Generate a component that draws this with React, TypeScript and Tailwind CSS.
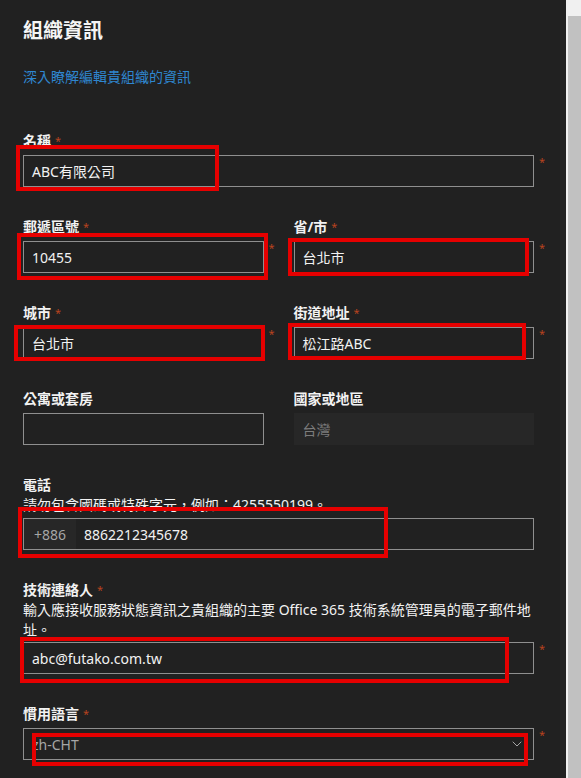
import { ChevronDown } from "lucide-react";

const FONT = {
  fontFamily: '"Segoe UI", "Noto Sans", "Noto Sans CJK TC", sans-serif',
};

// annotation box drawn over a field
function Mark({ className }: { className: string }) {
  return (
    <div
      className={`pointer-events-none absolute border-[4px] border-[#e60000] ${className}`}
    />
  );
}

function Star({ inLabel }: { inLabel?: boolean }) {
  return (
    <span
      className={
        inLabel
          ? "ml-1 text-[11px] font-normal text-[#b8431f] align-top"
          : "text-[11px] leading-none text-[#b8431f]"
      }
    >
      *
    </span>
  );
}

function Label({ text, required }: { text: string; required?: boolean }) {
  return (
    <div className="h-5 text-[14px] font-bold leading-5 text-[#f2f2f2]">
      {text}
      {required && <Star inLabel />}
    </div>
  );
}

function Input({
  value,
  required,
  disabled,
}: {
  value?: string;
  required?: boolean;
  disabled?: boolean;
}) {
  return (
    <div className="flex">
      <div
        className={
          disabled
            ? "flex h-8 flex-1 items-center bg-[#272727] px-[9px] text-[14px] text-[#7c7c7c]"
            : "flex h-8 flex-1 items-center border border-[#8f8f8f] px-2 text-[14px] text-[#f2f2f2]"
        }
      >
        {value}
      </div>
      <div className="w-[30px] pl-[5px] pt-[1px] text-[11px] leading-none">
        {required && <Star />}
      </div>
    </div>
  );
}

export default function App() {
  return (
    <div className="flex h-[778px] w-[581px] overflow-hidden" style={FONT}>
      <div className="relative w-[566px] bg-[#212121] pl-[23px] pr-[2px]">
        <h1 className="pt-[19px] text-[20px] font-bold leading-6 text-[#f5f5f5]">
          組織資訊
        </h1>
        <a className="mt-[24px] block text-[14px] leading-5 text-[#2f86cf]">
          深入瞭解編輯貴組織的資訊
        </a>

        <div className="mt-[44px]">
          <Label text="名稱" required />
          <div className="mt-1">
            <Input value="ABC有限公司" required />
          </div>
        </div>

        <div className="mt-[30px] grid grid-cols-2">
          <div>
            <Label text="郵遞區號" required />
            <div className="mt-1">
              <Input value="10455" required />
            </div>
          </div>
          <div>
            <Label text="省/市" required />
            <div className="mt-1">
              <Input value="台北市" required />
            </div>
          </div>
        </div>

        <div className="mt-[30px] grid grid-cols-2">
          <div>
            <Label text="城市" required />
            <div className="mt-1">
              <Input value="台北市" required />
            </div>
          </div>
          <div>
            <Label text="街道地址" required />
            <div className="mt-1">
              <Input value="松江路ABC" required />
            </div>
          </div>
        </div>

        <div className="mt-[30px] grid grid-cols-2">
          <div>
            <Label text="公寓或套房" />
            <div className="mt-1">
              <Input />
            </div>
          </div>
          <div>
            <Label text="國家或地區" />
            <div className="mt-1">
              <Input value="台灣" disabled />
            </div>
          </div>
        </div>

        <div className="mt-[30px]">
          <Label text="電話" />
          <div className="h-5 text-[14px] leading-5 text-[#f2f2f2]">
            請勿包含國碼或特殊字元，例如：4255550199。
          </div>
          <div className="mt-[3px] flex">
            <div className="flex h-8 flex-1 border border-[#8f8f8f] text-[14px]">
              <div className="flex w-[52px] items-center justify-center bg-[#272727] text-[#a6a6a6]">
                +886
              </div>
              <div className="flex items-center pl-2 text-[#f2f2f2]">
                8862212345678
              </div>
            </div>
            <div className="w-[30px]" />
          </div>
        </div>

        <div className="mt-[30px]">
          <Label text="技術連絡人" required />
          <div className="w-[512px] text-[14px] leading-5 text-[#f2f2f2]">
            輸入應接收服務狀態資訊之貴組織的主要 Office 365
            技術系統管理員的電子郵件地址。
          </div>
          <div className="mt-[2px]">
            <Input value="abc@futako.com.tw" required />
          </div>
        </div>

        <div className="mt-[30px]">
          <Label text="慣用語言" required />
          <div className="mt-1 flex">
            <div className="flex h-8 flex-1 items-center justify-between border border-[#8f8f8f] pl-2 pr-2 text-[14px] text-[#a6a6a6]">
              <span>zh-CHT</span>
              <ChevronDown className="h-4 w-4 text-[#a6a6a6]" strokeWidth={1.5} />
            </div>
            <div className="w-[30px] pl-[5px] pt-[1px] text-[11px] leading-none">
              <Star />
            </div>
          </div>
        </div>

        <Mark className="left-[16px] top-[145px] h-[46px] w-[203px]" />
        <Mark className="left-[17px] top-[233px] h-[47px] w-[251px]" />
        <Mark className="left-[288px] top-[238px] h-[38px] w-[241px]" />
        <Mark className="left-[14px] top-[325px] h-[36px] w-[251px]" />
        <Mark className="left-[288px] top-[323px] h-[37px] w-[238px]" />
        <Mark className="left-[18px] top-[507px] h-[51px] w-[370px]" />
        <Mark className="left-[20px] top-[637px] h-[46px] w-[489px]" />
        <Mark className="left-[32px] top-[733px] h-[33px] w-[496px]" />
      </div>
      <div className="flex w-[15px] flex-col bg-[#f0f0f0]">
        <div className="h-4" />
        <div className="ml-[2px] flex-1 bg-[#c1c1c1]" />
      </div>
    </div>
  );
}
